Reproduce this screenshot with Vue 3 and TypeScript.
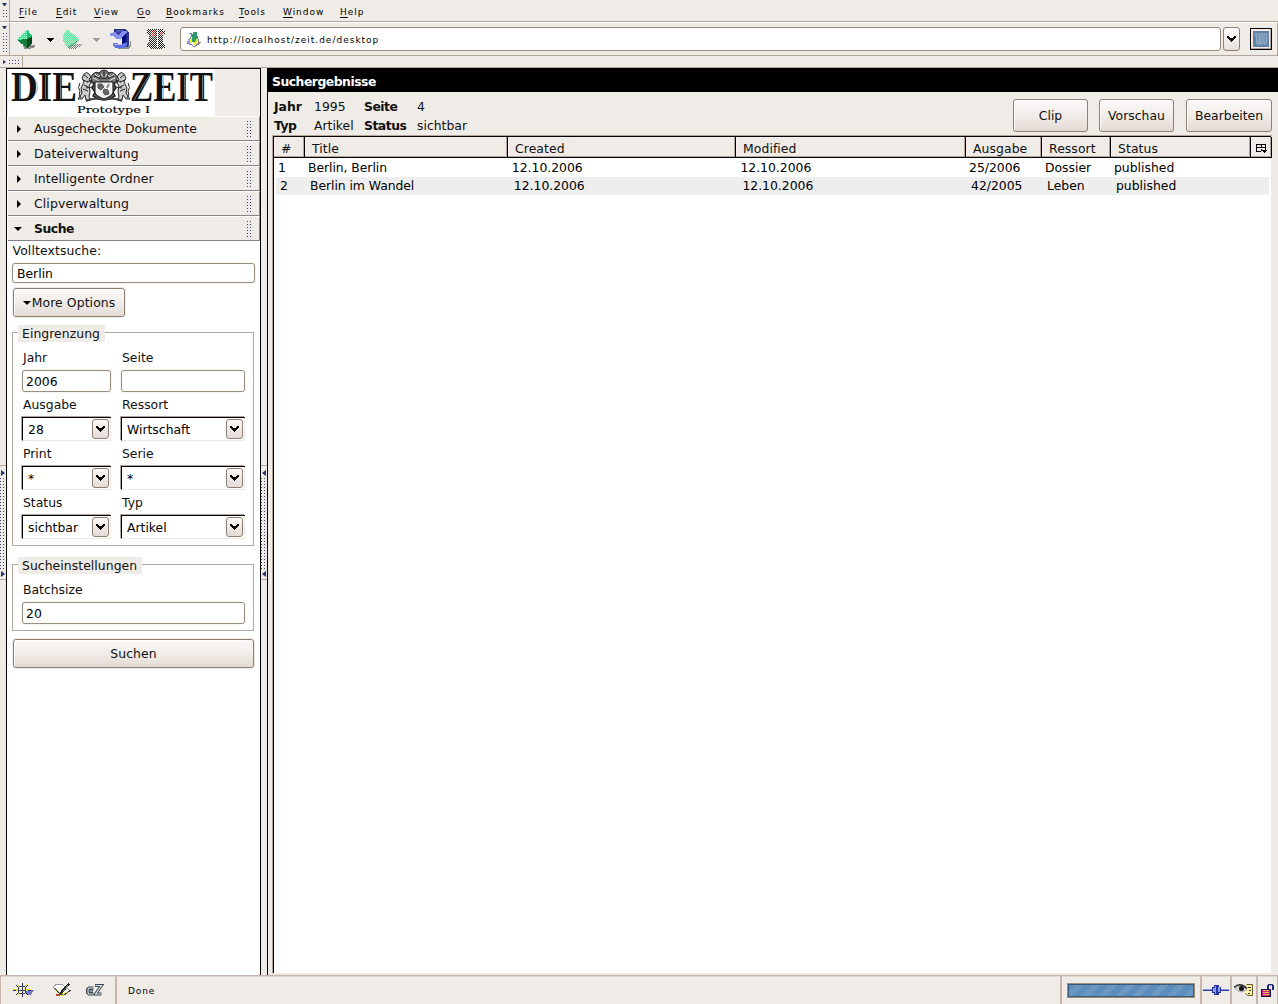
<script setup lang="ts">
interface Column { label: string; width: number }
interface Field { label: string; value: string; kind: 'input' | 'select' }

const menus: { label: string; width: number }[] = [
  { label: 'File', width: 37 },
  { label: 'Edit', width: 38 },
  { label: 'View', width: 43 },
  { label: 'Go', width: 29 },
  { label: 'Bookmarks', width: 73 },
  { label: 'Tools', width: 44 },
  { label: 'Window', width: 57 },
  { label: 'Help', width: 40 },
]

const sections: string[] = ['Ausgecheckte Dokumente', 'Dateiverwaltung', 'Intelligente Ordner', 'Clipverwaltung']

const fields: [Field, Field][] = [
  [{ label: 'Jahr', value: '2006', kind: 'input' }, { label: 'Seite', value: '', kind: 'input' }],
  [{ label: 'Ausgabe', value: '28', kind: 'select' }, { label: 'Ressort', value: 'Wirtschaft', kind: 'select' }],
  [{ label: 'Print', value: '*', kind: 'select' }, { label: 'Serie', value: '*', kind: 'select' }],
  [{ label: 'Status', value: 'sichtbar', kind: 'select' }, { label: 'Typ', value: 'Artikel', kind: 'select' }],
]

const columns: Column[] = [
  { label: '#', width: 31 },
  { label: 'Title', width: 203 },
  { label: 'Created', width: 228 },
  { label: 'Modified', width: 230 },
  { label: 'Ausgabe', width: 76 },
  { label: 'Ressort', width: 69 },
  { label: 'Status', width: 140 },
]

const rows: string[][] = [
  ['1', 'Berlin, Berlin', '12.10.2006', '12.10.2006', '25/2006', 'Dossier', 'published'],
  ['2', 'Berlin im Wandel', '12.10.2006', '12.10.2006', '42/2005', 'Leben', 'published'],
]
</script>

<template>
  <div class="window">
    <div class="menubar">
      <div class="handle"><i class="tri-down"></i><i class="dots"></i></div>
      <nav class="menus">
        <span v-for="m in menus" :key="m.label" :style="{ width: m.width + 'px' }"><u>{{ m.label[0] }}</u>{{ m.label.slice(1) }}</span>
      </nav>
    </div>

    <div class="navbar">
      <div class="handle"><i class="tri-down"></i><i class="dots"></i></div>
      <svg class="nav-icons" width="160" height="32" viewBox="0 0 160 32" shape-rendering="crispEdges">
        <defs>
          <pattern id="dither" width="2" height="2" patternUnits="userSpaceOnUse"><path d="M0 0h1v1H0zM1 1h1v1H1z" fill="#efebe7" /></pattern>
          <pattern id="sparkle" width="2" height="2" patternUnits="userSpaceOnUse"><path d="M0 0h1v1H0z" fill="#9dffcf" /></pattern>
        </defs>
        <path d="M13 21h12v2l-5 2h-6z" fill="#8c8c8c" />
        <path d="M17 5l5 7v8l-5 4-10-8z" fill="#18a050" />
        <path d="M17 5v10l-10 1z" fill="#40e898" />
        <path d="M17 5v10l-10 1z" fill="url(#sparkle)" />
        <path d="M7 16l10-1v9z" fill="#10803c" />
        <path d="M17 15l5-2v7l-5 4z" fill="#004a1c" />
        <path d="M17 5l5 7-5 3z" fill="#20c070" />
        <path d="M37 14h7v1h-1v1h-1v1h-1v1h-1v-1h-1v-1h-1v-1h-1z" fill="#000" />
        <path d="M60 20h12v2l-7 3h-6z" fill="#777" />
        <path d="M58 19h14v7H58z" fill="url(#dither)" />
        <path d="M57 5l12 10v2l-10 7-2-1-4-6v-5z" fill="#62e0a0" />
        <path d="M57 5l12 10-8 1-8-1v-3z" fill="#4cf09c" />
        <path d="M69 16v1l-10 7-2-1z" fill="#2c9c60" />
        <path d="M52 4h18v22H52z" fill="url(#dither)" opacity=".6" />
        <path d="M83 14h7v1h-1v1h-1v1h-1v1h-1v-1h-1v-1h-1v-1h-1z" fill="#9c9c9c" />
        <path d="M106 22h14v-5h1v5l-3 3h-10z" fill="#8c8c8c" />
        <path d="M104 5h11l4 4v12l-2 2h-5V12l-8-2z" fill="#28308c" />
        <path d="M100 9l5-1 3 3 5-4h4v1l-6 7h-5l-3-3h-3z" fill="#8490f0" />
        <path d="M106 6h8l-5 3-3-1z" fill="#4c58b8" />
        <path d="M112 13l4-4v11l-4 2z" fill="#080c80" />
        <path d="M107 15h4v3h-4z" fill="#e8ecfc" />
        <path d="M103 19l9 1 5-2v3l-3 3h-9l-2-2z" fill="#6070e0" />
        <path d="M104 20h8v1h-8z" fill="#b0bcff" />
        <path d="M137 5h16v2h2v3h-2v10h2v4h-3v1h-12v-2h-3v-4h2v-9h-2z" fill="#222" />
        <path d="M141 7h4v6h-4zM150 8h3v3h-3z" fill="#e02020" />
        <path d="M135 4h20v22h-20z" fill="url(#dither)" />
        <path d="M147 6h1v18h-1z" fill="#fff" />
      </svg>
      <div class="urlbox">
        <svg width="17" height="17" viewBox="0 0 17 17" shape-rendering="crispEdges">
          <path d="M4 2h2v4L2 12l5 2 2 2 4-3 1-3-3-7" fill="#fff" stroke="#6a72d8" />
          <path d="M13 11h3v1l-3 2h-2z" fill="#888" />
          <path d="M2 11l3-5 2 5-2 2z" fill="#a0a6f8" />
          <path d="M5 8l2-2v6H5zM11 7l2 3-4 4-1-2z" fill="#f0f020" />
          <path d="M8 1h4v6l-2 4H7V5z" fill="#309868" />
        </svg>
        <span>http://localhost/zeit.de/desktop</span>
      </div>
      <div class="urldrop"><svg class="chev" width="9" height="6" viewBox="0 0 9 6" shape-rendering="crispEdges"><path d="M0 0h2v1h1v1h3V1h1V0h2v2H8v1H7v1H6v1H5v1H4V5H3V4H2V3H1V2H0z" /></svg></div>
      <div class="throbber">
        <svg width="16" height="16" viewBox="0 0 16 16"><rect width="16" height="16" fill="#6483a4" /><path d="M2 3h12M3 3l1 10h2V4M7 4v9h2V4M11 4v9h2l1-10" fill="none" stroke="#9dbad6" stroke-width="1" /></svg>
      </div>
    </div>

    <div class="linksbar"><div class="link-handle"><i></i><b></b></div></div>

    <main class="body">
      <div class="splitter left"><div class="grip"><i></i><i></i></div></div>
      <aside class="sidebar">
        <div class="brand">
          <svg width="207" height="47" viewBox="0 0 207 47">
            <rect width="207" height="47" fill="#fff" />
            <g font-family="'Liberation Serif', serif" font-weight="bold" font-size="43" fill="#111">
              <text x="3" y="32" textLength="66" lengthAdjust="spacingAndGlyphs">DIE</text>
              <text x="122" y="32" textLength="83" lengthAdjust="spacingAndGlyphs">ZEIT</text>
            </g>
            <path d="M11.500 6v24M37.500 6v24M52.500 6v24M155.500 6v24M176.500 6v24M194.500 6v24M142 5L126 31M27 10q5 8 0 16" fill="none" stroke="#999" stroke-width=".7" />
            <g fill="none" stroke="#222" stroke-width="1">
              <path d="M84 12q-3-4 1-7 3-3 6-1 2-3 5-3t5 3q3-2 6 1 4 3 1 7l-3 3H87z" fill="#777" />
              <path d="M87 5l3 3 3-3 3 4 3-4 3 3 4-3M85 9q5 1 6 4M107 9q-5 1-6 4" stroke="#eee" />
              <path d="M91 3l2 5M101 3l-2 5M96 2v8M86 7q10 5 20 0" />
              <path d="M82 12l4 3-2 4 3 4-2 4 5 3h12l5-3-2-4 3-4-2-4 4-3" fill="#666" stroke-width="1.500" />
              <path d="M87 13h18v11q-2 4-9 6-7-2-9-6z" fill="#f4f4f4" stroke-width="1.200" />
              <path d="M90 15l4 0 2 3-3 3-3-2zM96 20l4 1 1 4-4 1-2-3z" fill="#666" stroke="#555" />
              <path d="M101 15l-2 4" stroke-width="2" stroke="#888" />
              <path d="M76 5q3-3 5 0l2 3-2 2 2 4-2 3 1 5-1 6 2 3h-5l-1-5-3 4h-4l4-6-1-5 3-6-2-4z" fill="#ccc" />
              <path d="M116 5q-3-3-5 0l-2 3 2 2-2 4 2 3-1 5 1 6-2 3h5l1-5 3 4h4l-4-6 1-5-3-6 2-4z" fill="#ccc" />
              <path d="M76 6l4 3M75 11l5 2M76 16l4 2M75 20l5 2M79 13l5-2M78 19l6-1M116 6l-4 3M117 11l-5 2M116 16l-4 2M117 20l-5 2M113 13l-5-2M114 19l-6-1" />
              <path d="M73 29q-3-3-1-7-3-3 0-8M119 29q3-3 1-7 3-3 0-8" />
              <path d="M78 32q8-4 18-1 10-3 18 1" stroke-width="2" stroke="#444" />
            </g>
            <text x="69" y="44" font-family="'DejaVu Serif', 'Liberation Serif', serif" font-size="9.5" fill="#000" stroke="#000" stroke-width=".15" textLength="73" lengthAdjust="spacingAndGlyphs">Prototype I</text>
          </svg>
        </div>
        <div v-for="s in sections" :key="s" class="section"><i class="tri-right"></i><span>{{ s }}</span><em></em></div>
        <div class="section open"><i class="tri-open"></i><span>Suche</span><em></em></div>

        <div class="search">
          <label class="full-label">Volltextsuche:</label>
          <div class="input full">Berlin</div>
          <div class="button more"><i class="tri-open"></i>More Options</div>
          <section class="group first">
            <div class="legend">Eingrenzung</div>
            <div class="fields">
              <template v-for="(pair, i) in fields" :key="i">
                <label v-for="f in pair" :key="f.label">{{ f.label }}</label>
                <template v-for="f in pair" :key="f.label + '-v'">
                  <div v-if="f.kind === 'input'" class="input">{{ f.value }}</div>
                  <div v-else class="select"><span>{{ f.value }}</span><div class="drop"><svg width="9" height="6" viewBox="0 0 9 6" shape-rendering="crispEdges"><path d="M0 0h2v1h1v1h3V1h1V0h2v2H8v1H7v1H6v1H5v1H4V5H3V4H2V3H1V2H0z" /></svg></div></div>
                </template>
              </template>
            </div>
          </section>
          <section class="group second">
            <div class="legend">Sucheinstellungen</div>
            <div class="batch"><label>Batchsize</label><div class="input">20</div></div>
          </section>
          <div class="button submit">Suchen</div>
        </div>
      </aside>
      <div class="splitter right"><div class="grip"><i></i><i></i></div></div>

      <div class="content">
        <header>Suchergebnisse</header>
        <div class="info">
          <dl>
            <dt>Jahr</dt><dd>1995</dd><dt>Seite</dt><dd>4</dd>
            <dt>Typ</dt><dd>Artikel</dd><dt>Status</dt><dd>sichtbar</dd>
          </dl>
          <div class="actions">
            <div class="button">Clip</div>
            <div class="button">Vorschau</div>
            <div class="button wide">Bearbeiten</div>
          </div>
        </div>
        <div class="tree">
          <div class="thead">
            <div v-for="c in columns" :key="c.label" class="th" :style="{ width: c.width + 'px' }">{{ c.label }}</div>
            <div class="th picker">
              <svg width="11" height="10" viewBox="0 0 11 10" shape-rendering="crispEdges"><path d="M0 0h10v6H9V4H6v1H5V4H1v3h4v1H0zM1 1v2h4V1zM6 1v2h3V1zM5 4h1v3H5z" fill="#000" fill-rule="evenodd" /><path d="M6 6h5v1h-1v1H9v1H8V8H7V7H6z" /></svg>
            </div>
          </div>
          <div v-for="r in rows" :key="r[0]" class="tr">
            <span v-for="(cell, i) in r" :key="i" :style="{ width: columns[i].width + 'px' }">{{ cell }}</span>
          </div>
        </div>
      </div>
    </main>

    <footer class="statusbar">
      <div class="modes">
        <svg width="22" height="16" viewBox="0 0 22 16" shape-rendering="crispEdges">
          <path d="M13 8h8l-3 5h-6l-2-3z" fill="#7478c8" />
          <path d="M4 3l10 10M14 3L4 13M0 8h18" stroke="#e8e030" stroke-width="2" />
          <path d="M9 1v3M9 12v3M0 8h3M15 8h3M3 3l2 2M15 3l-2 2M3 13l2-2M15 13l-2-2" stroke="#223070" />
          <circle cx="9" cy="8" r="4" fill="#f4f0a0" stroke="#39417c" />
          <path d="M9 4v8M5 8h8" stroke="#39417c" />
        </svg>
        <svg width="20" height="16" viewBox="0 0 20 16" shape-rendering="crispEdges">
          <path d="M1 5l4-3h5l8 7-7 4z" fill="#fff" stroke="#999" />
          <path d="M3 7l6 5 10-4-8 6H7z" fill="#eee820" />
          <path d="M2 6l6 6h3M12 13l7-5" fill="none" stroke="#444" />
          <path d="M16 1l2 1-7 9-3 1 1-3z" fill="#222" /><path d="M16 3l-5 7" stroke="#607850" /><path d="M4 12h4v2H4z" fill="#c04050" />
        </svg>
        <svg width="18" height="14" viewBox="0 0 18 14"><path d="M7.500 5H3L1.500 6.500v3L3 11h4.500M3 8h4M9 2.500h6.500L9.500 11h6" fill="none" stroke="#34424e" stroke-width="3" /><path d="M7.500 5H3L2 6.500v3L3 11h4.500M3.500 8h3M9.500 2.500h6L9.500 11h6" fill="none" stroke="#e4eaee" stroke-width="1.100" /></svg>
      </div>
      <div class="message">Done</div>
      <div class="progress"><div></div></div>
      <div class="cell online">
        <svg width="26" height="14" viewBox="0 0 26 14" shape-rendering="crispEdges"><path d="M0 6h9v2H0zM17 6h9v2h-9z" fill="#30389c" /><path d="M0 6h9v1H0zM17 6h9v1h-9z" fill="#8890e8" /><path d="M9 4h2V2h5v2h2v6h-2v2h-5v-2H9z" fill="#28309c" /><path d="M10 5h2v4h-2zM12 3h1v8h-1zM15 4h2v5h-2z" fill="#88a0f8" /></svg>
      </div>
      <div class="cell eye">
        <svg width="20" height="14" viewBox="0 0 20 14">
          <path d="M12.500 1.500h6v11h-5l-2-2" fill="#fff4a0" stroke="#665c30" /><path d="M14 4.500h3M15 7.500h2M14 10.500h2" stroke="#333" />
          <path d="M1 5.500q5-5 12 1-5 4-10 1z" fill="#ddd" stroke="#888" stroke-width=".6" />
          <circle cx="7.500" cy="5.500" r="2.500" fill="#111" />
          <path d="M0 4.500q6-6 13 1" fill="none" stroke="#222" stroke-width="1.600" />
        </svg>
      </div>
      <div class="cell lock">
        <svg width="15" height="14" viewBox="0 0 15 14" shape-rendering="crispEdges"><path d="M8 6V3l1-1h3l1 1v4" fill="none" stroke="#28286c" stroke-width="2" /><path d="M9 2h3" stroke="#a0a0e8" /><path d="M1 6h9v7H1z" fill="#c82078" stroke="#181850" /><path d="M3 7h6v1H3zM3 9h6v1H3zM3 11h6v1H3z" fill="#f0b060" /></svg>
      </div>
    </footer>
  </div>
</template>

<style>
body { margin: 0; background: #efebe7; }
</style>

<style scoped>
* { box-sizing: border-box; }
.window { width: 1278px; height: 1004px; display: flex; flex-direction: column; overflow: hidden; background: #efebe7; color: #101010; font: 12.4px/18px "DejaVu Sans", sans-serif; white-space: nowrap; }
i, em { font-style: normal; }

.menubar { height: 22px; display: flex; border-bottom: 1px solid #b5a69b; font-size: 9px; letter-spacing: 0.95px; }
.handle { width: 10px; flex: none; border-right: 1px solid #b5a69b; display: flex; flex-direction: column; padding: 3px 0 2px 2px; }
.handle .tri-down { border: 2.5px solid transparent; border-top: 3px solid #29316b; border-bottom: 0; width: 5px; margin-bottom: 3px; }
.handle .dots { flex: 1; width: 5px; background: radial-gradient(circle, #39417b 0.8px, transparent 0.9px) 0 0 / 3px 3px; }
.menus { display: flex; padding-left: 9px; line-height: 24px; color: #000; }
.menus u { text-underline-offset: 2px; }

.navbar { height: 34px; display: flex; align-items: flex-start; border-bottom: 1px solid #b5a69b; border-top: 1px solid #fff; border-right: 1px solid #b5a69b; }
.navbar .handle { height: 32px; }
.nav-icons { margin-top: 1px; flex: none; }
.urlbox { margin: 4px 0 0 10px; width: 1041px; height: 24px; border: 1px solid #9a8c7c; border-radius: 3px; background: #fff; display: flex; align-items: center; padding-left: 4px; font-size: 9px; letter-spacing: 1px; color: #000; }
.urlbox span { margin: 1px 0 0 5px; }
.urldrop { margin: 4px 0 0 2px; width: 17px; height: 24px; border: 1px solid #8f7f73; border-radius: 3px; background: linear-gradient(#fff, #e7dfd9); display: grid; place-items: center; }
.throbber { margin: 5px 0 0 10px; width: 22px; height: 22px; border: 1px solid #000; background: #f6e8e4; display: grid; place-items: center; box-shadow: inset -1px -1px #b5a69b; }

.linksbar { height: 12px; border-bottom: 1px solid #b5a69b; }
.link-handle { width: 23px; height: 11px; border-right: 1px solid #b5a69b; display: flex; align-items: center; padding-left: 3px; }
.link-handle i { border: 2.5px solid transparent; border-left: 3px solid #29316b; border-right: 0; }
.link-handle b { width: 12px; height: 6px; margin-left: 2px; background: radial-gradient(circle, #39417b 0.8px, transparent 0.9px) 0 0 / 3px 3px; }

.body { height: 907px; display: flex; }
.splitter { width: 7px; flex: none; display: flex; flex-direction: column; border-right: 1px solid #000; padding-top: 397px; }
.grip { height: 115px; border: solid #b5a69b; border-width: 1px 0; display: flex; flex-direction: column; justify-content: space-between; align-items: center; padding: 2px 0 0; background: radial-gradient(circle, #39417b 0.7px, transparent 0.8px) 2px 0 / 3px 3px content-box; background-clip: content-box; }
.grip i { width: 6px; height: 10px; background: #efebe7; display: grid; place-items: center; }
.grip i::after { content: ""; border: 3px solid transparent; border-left: 4px solid #29316b; border-right: 0; }
.right .grip i::after { transform: scaleX(-1); }

.sidebar { width: 254px; flex: none; background: #fff; border-top: 1px solid #000; border-right: 1px solid #000; }
.brand { height: 47px; background: #efebe7; padding-left: 1px; }
.brand svg { display: block; overflow: visible; }
.section { height: 25px; margin-left: 1px; width: 252px; background: #efebe7; border-top: 1px solid #fff; border-right: 1px solid #848284; border-bottom: 1px solid #848284; display: flex; align-items: center; }
.section > i { margin-left: 9px; }
.section span { margin-left: 12px; flex: 1; }
.section:not(.open):nth-child(n+3) { letter-spacing: 0.13px; }
.section em { width: 6px; height: 17px; margin-right: 7px; background: radial-gradient(circle, #39417b 0.7px, transparent 0.8px) 0 0 / 3px 3px; }
.tri-right { width: 4px; border: 4px solid transparent; border-left: 4px solid #000; border-right: 0; }
.section .tri-right + span { margin-left: 13px; }
.tri-open { width: 8px; border: 4px solid transparent; border-top: 4px solid #000; border-bottom: 0; }
.open { font-weight: bold; letter-spacing: -0.45px; }
.section.open > i { margin-left: 6px; }
.section.open span { margin-left: 12px; }

.search { padding-left: 5px; }
.full-label { display: block; height: 22px; line-height: 20px; letter-spacing: 0.12px; padding-left: 0.5px; }
.input { height: 22px; border: 1px solid #9a8c7c; border-radius: 3px; background: #fff; padding-left: 3px; line-height: 21px; box-shadow: 0 0 0 0.5px #efe9e4; color: #000; }
.input.full { width: 243px; height: 20px; line-height: 19px; padding-left: 4px; }
.button { border: 1px solid #8f7f73; border-radius: 3px; background: linear-gradient(#fbf9f8, #efebe7 55%, #e4dad5); box-shadow: inset 1px 1px #fff, 0 0 0 1px #eeeae6; display: flex; align-items: center; justify-content: center; }
.more { margin: 5px 0 0 1px; width: 112px; height: 29px; letter-spacing: 0.1px; }
.more i { margin-right: 1px; }
.group { width: 242px; border: 1px solid #b5a69b; padding-left: 9px; }
.first { margin-top: 15px; height: 214px; }
.second { margin-top: 18px; height: 67px; }
.legend { width: max-content; height: 17px; line-height: 18px; margin: -8px 0 0 -4px; padding: 0 5px 0 4px; background: #efebe7; letter-spacing: 0.06px; }
.fields { display: grid; grid-template-columns: 89px 124px; column-gap: 10px; grid-template-rows: 24px 22px 25px 24px 25px 24px 25px 24px; margin-top: 4px; }
.fields label { line-height: 24px; padding-left: 1px; }
.fields label:nth-of-type(n+3) { line-height: 26px; }
.select { border-top: 1px solid #000; border-left: 1px solid #000; border-bottom: 1px solid #efe9e4; background: #fff; display: flex; align-items: center; padding: 0 2px 0 5px; color: #000; box-shadow: -1px -1px #b5a69b, inset -1px 0 #efe9e4; }
.select span { flex: 1; margin-top: 1px; }
.drop { width: 17px; height: 20px; border: 1px solid #8f7f73; border-radius: 3px; background: linear-gradient(#fbf9f8, #e4dad5); display: grid; place-items: center; }
.batch { margin-top: 4px; width: 223px; }
.batch label { display: block; height: 24px; line-height: 23px; padding-left: 1px; }
.submit { width: 241px; height: 29px; margin: 8px 0 0 1px; letter-spacing: 0.1px; }

.content { flex: 1; display: flex; flex-direction: column; }
.content header { height: 24px; background: #000; color: #fff; font-weight: bold; letter-spacing: -0.5px; padding-left: 4px; line-height: 27px; }
.info { height: 43px; display: flex; justify-content: space-between; padding: 6px 6px 0 6px; }
dl { margin: 0; display: grid; grid-template-columns: 40px 50px 53px 60px; grid-auto-rows: 19px; }
dt { font-weight: bold; letter-spacing: -0.5px; }
dt:first-child { letter-spacing: 0; }
dd { margin: 0; }
.actions { display: flex; gap: 11px; margin-top: 1px; }
.actions .button { width: 75px; height: 33px; }
.actions .wide { width: 86px; margin-left: 1px; }
.tree { flex: 1; margin: 0 5px 0 4px; background: #fff; border: 1px solid #b5a69b; border-right: 2px solid #efe9e4; border-bottom: 2px solid #efe9e4; box-shadow: inset 1px 1px #000; padding: 1px 0 0 1px; }
.thead { height: 21px; display: flex; }
.th { flex: none; background: #efebe7; border-right: 1px solid #000; border-bottom: 1px solid #000; box-shadow: inset -1px -1px #b5a69b, inset 1px 1px #fbeeee; padding-left: 7px; line-height: 23px; letter-spacing: 0.08px; }
.picker { width: 21px; padding: 7px 0 0 5px; line-height: 0; }
.tr { height: 18px; display: flex; margin: 0 2px 0 2px; padding-left: 2px; color: #000; }
.thead + .tr { margin-top: 1px; }
.tr span:first-child { margin-right: -1px; }
.tr span { flex: none; }
.tr span:nth-child(2) { letter-spacing: -0.06px; }
.tr span:nth-child(3) { padding-left: 0.8px; }
.tr span:nth-child(4) { padding-left: 1.4px; }
.tr:last-child { background: #eee; padding-left: 4px; }

/* The nav bar's right end holds the buttons one pixel in from the tree edge. */
.info { padding-right: 6px; }
.content { width: 1010px; flex: none; }
.actions { margin-right: 0; }

.statusbar { height: 29px; flex: none; display: flex; border-top: 1px solid #c8b6ac; box-shadow: inset 0 1px #e0d6d0; }
.modes { width: 117px; border-right: 2px solid #c8b6ac; border-left: 1px solid #c8b6ac; display: flex; align-items: center; padding-left: 12px; }
.modes svg:nth-child(2) { margin-left: 17px; }
.modes svg:nth-child(3) { margin-left: 14px; }
.message { flex: 1; padding-left: 11px; font-size: 9px; letter-spacing: 0.9px; line-height: 30px; color: #000; }
.progress { width: 142px; border-left: 2px solid #c8b6ac; border-right: 2px solid #c8b6ac; padding: 7px 5px; }
.progress div { width: 128px; height: 15px; border: 1px solid #9d8c7c; background: repeating-linear-gradient(135deg, #5c8ebd 0 6px, #6b98c2 6px 12px); box-shadow: inset 0 0 0 1px #39597b; }
.cell { display: grid; place-items: center; border-right: 2px solid #c8b6ac; }
.online { width: 30px; }
.eye { width: 26px; }
.lock { width: 20px; border-right: 1px solid #c8b6ac; }
</style>
